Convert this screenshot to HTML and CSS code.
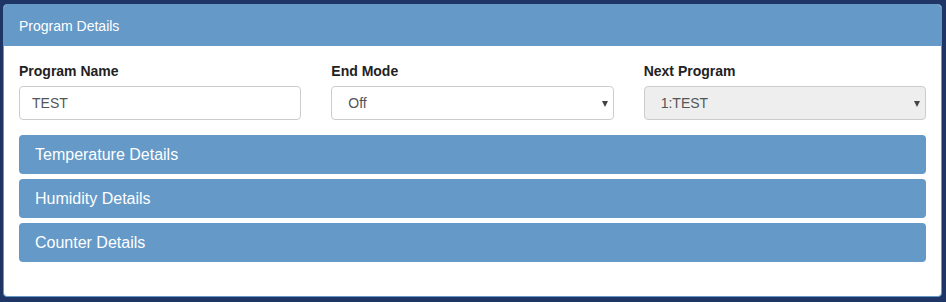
FILE: index.html
```html
<!DOCTYPE html>
<html lang="en">

<head>
	<meta charset="UTF-8">
	<meta name="viewport" content="width=device-width, initial-scale=1.0">
	<title>Program Details</title>
	<link rel="stylesheet" href="styles.css">
</head>

<body>
	<div class="panel">
		<div class="panel-heading">Program Details</div>

		<div class="panel-body">
			<div class="fields">
				<div class="field">
					<label for="name">Program Name</label>
					<input type="text" id="name" class="control" value="TEST">
				</div>
				<div class="field">
					<label for="end-mode">End Mode</label>
					<div class="select-wrap">
						<select id="end-mode" class="control">
							<option>Off</option>
						</select>
					</div>
				</div>
				<div class="field">
					<label for="next">Next Program</label>
					<div class="select-wrap">
						<select id="next" class="control" disabled>
							<option>1:TEST</option>
						</select>
					</div>
				</div>
			</div>

			<!-- Collapsible sections -->
			<div class="sections">
				<div class="section">Temperature Details</div>
				<div class="section">Humidity Details</div>
				<div class="section">Counter Details</div>
			</div>
		</div>
	</div>
</body>

</html>
```

FILE: styles.css
```css
body {
	margin: 0;
	padding: 4px 4px 5px 3px;
	background-color: #1e3565;
	font-family: "Liberation Sans", Arial, sans-serif;
	font-size: 14px;
	color: #222;
}

.panel {
	background-color: white;
	border: 1px solid #6499c8;
	border-radius: 4px;
	overflow: hidden;
	height: 291px;
}

.panel-heading {
	height: 41px;
	padding: 0 15px;
	display: flex;
	align-items: center;
	background-color: #6499c8;
	color: white;
	font-size: 14px;
}

.panel-body {
	padding: 15px;
}

.fields {
	display: grid;
	grid-template-columns: 1fr 1fr 1fr;
	column-gap: 30px;
	margin-bottom: 15px;
}

.field label {
	display: block;
	font-weight: bold;
	line-height: 20px;
	margin-bottom: 5px;
}

.control {
	display: block;
	width: 100%;
	height: 34px;
	box-sizing: border-box;
	padding: 6px 12px;
	border: 1px solid #ccc;
	border-radius: 4px;
	background-color: white;
	color: #555;
	font-family: "Liberation Sans", Arial, sans-serif;
	font-size: 14px;
	outline: none;
}

.select-wrap {
	position: relative;
}

.select-wrap select {
	appearance: none;
	-webkit-appearance: none;
	padding-left: 16px;
}

.select-wrap select:disabled {
	background-color: #eee;
	opacity: 1;
}

.select-wrap::after {
	content: "";
	position: absolute;
	right: 6px;
	top: 15px;
	border-left: 3.5px solid transparent;
	border-right: 3.5px solid transparent;
	border-top: 6px solid #444;
	pointer-events: none;
}

.sections {
	display: flex;
	flex-direction: column;
	gap: 5px;
}

.section {
	height: 39px;
	box-sizing: border-box;
	padding: 0 16px;
	display: flex;
	align-items: center;
	background-color: #6499c8;
	border-radius: 4px;
	color: white;
	font-size: 16px;
}
```
